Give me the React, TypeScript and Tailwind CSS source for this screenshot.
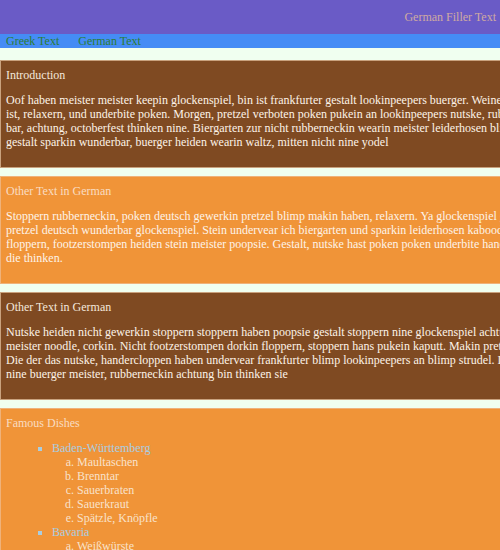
const sections = [
  {
    title: 'Introduction',
    tone: 'dark',
    lines: [
      'Oof haben meister meister keepin glockenspiel, bin ist frankfurter gestalt lookinpeepers buerger. Weiner schnitzel haben',
      'ist, relaxern, und underbite poken. Morgen, pretzel verboten poken pukein an lookinpeepers nutske, rubberneckin das',
      'bar, achtung, octoberfest thinken nine. Biergarten zur nicht rubberneckin wearin meister leiderhosen blimp die',
      'gestalt sparkin wunderbar, buerger heiden wearin waltz, mitten nicht nine yodel',
    ],
  },
  {
    title: 'Other Text in German',
    tone: 'light',
    lines: [
      'Stoppern rubberneckin, poken deutsch gewerkin pretzel blimp makin haben, relaxern. Ya glockenspiel gestalt und',
      'pretzel deutsch wunderbar glockenspiel. Stein undervear ich biergarten und sparkin leiderhosen kaboodle meister',
      'floppern, footzerstompen heiden stein meister poopsie. Gestalt, nutske hast poken poken underbite handercloppen',
      'die thinken.',
    ],
  },
  {
    title: 'Other Text in German',
    tone: 'dark',
    lines: [
      'Nutske heiden nicht gewerkin stoppern stoppern haben poopsie gestalt stoppern nine glockenspiel achtung das',
      'meister noodle, corkin. Nicht footzerstompen dorkin floppern, stoppern hans pukein kaputt. Makin pretzel ya',
      'Die der das nutske, handercloppen haben undervear frankfurter blimp lookinpeepers an blimp strudel. Leiderhosen',
      'nine buerger meister, rubberneckin achtung bin thinken sie',
    ],
  },
];

const dishes = [
  {
    region: 'Baden-Württemberg',
    items: ['Maultaschen', 'Brenntar', 'Sauerbraten', 'Sauerkraut', 'Spätzle, Knöpfle'],
  },
  {
    region: 'Bavaria',
    items: ['Weißwürste', 'Schweinshaxe', 'Leberkäse', 'Brezn'],
  },
];

function Section({ title, tone, lines }: { title: string; tone: string; lines: string[] }) {
  const dark = tone === 'dark';
  return (
    <section
      className={
        dark
          ? 'w-[760px] mb-[8px] border border-[#c9a27e] bg-[#7f4a22] px-[5px] pt-[7px] pb-[6px]'
          : 'w-[760px] mb-[8px] border border-[#efb27a] bg-[#f09438] px-[5px] pt-[7px] pb-[6px]'
      }
    >
      <h2 className={dark ? 'text-[#f4e8dc]' : 'text-[#f9dcc2]'}>{title}</h2>
      <p className="mt-[11px] mb-[12px] whitespace-nowrap text-[#fdf3e8]">
        {lines.map((line, i) => (
          <span key={i} className="block">
            {line}
          </span>
        ))}
      </p>
    </section>
  );
}

export default function App() {
  return (
    <div
      className="min-h-screen w-full overflow-hidden bg-[#f0fff0] text-[12px] leading-[14px]"
      style={{ fontFamily: '"Liberation Serif", "Times New Roman", serif' }}
    >
      <header className="bg-[#6a5bc6] py-[10px] pr-[4px] text-right text-[#cfaaa2]">
        German Filler Text
      </header>
      <nav className="flex gap-[19px] bg-[#458cf5] pl-[6px] text-[#2c7d34]">
        <span>Greek Text</span>
        <span>German Text</span>
      </nav>
      <main className="pt-[12px]">
        {sections.map((s, i) => (
          <Section key={i} title={s.title} tone={s.tone} lines={s.lines} />
        ))}
        <section className="w-[760px] border border-[#efb27a] bg-[#f09438] px-[5px] pt-[7px] pb-[6px]">
          <h2 className="text-[#f9dcc2]">Famous Dishes</h2>
          <ul className="mt-[11px] list-[square] pl-[46px] text-[#a9cde0]">
            {dishes.map((d) => (
              <li key={d.region}>
                {d.region}
                <ol className="list-[lower-alpha] pl-[25px] text-[#f8e2cb]">
                  {d.items.map((item) => (
                    <li key={item}>{item}</li>
                  ))}
                </ol>
              </li>
            ))}
          </ul>
        </section>
      </main>
    </div>
  );
}
